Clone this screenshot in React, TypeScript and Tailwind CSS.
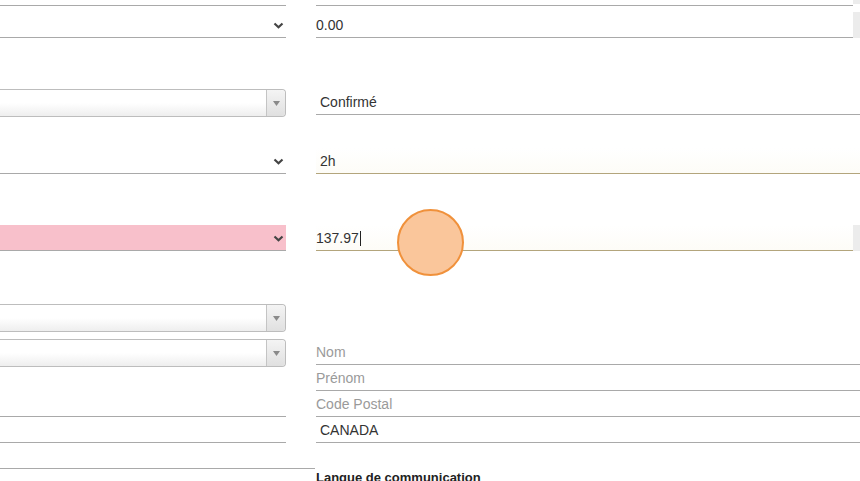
import React from "react";

const Chevron = () => (
  <svg width="11" height="7" viewBox="0 0 11 7" className="mr-[2px] mt-[1px]">
    <polyline
      points="1.5,1.5 5.5,5.2 9.5,1.5"
      fill="none"
      stroke="#444"
      strokeWidth="2.2"
    />
  </svg>
);

const NativeSelect = ({ pink = false }: { pink?: boolean }) => (
  <div
    className={`flex h-[26px] items-center justify-end border-b border-[#a9a9a9] ${
      pink ? "bg-[#f8c0cb]" : ""
    }`}
  >
    <Chevron />
  </div>
);

const ComboBox = ({ className = "" }: { className?: string }) => (
  <div
    className={`flex h-[28px] rounded-r-[4px] border border-l-0 border-[#bdbdbd] bg-gradient-to-b from-white from-50% to-[#eeeeee] ${className}`}
  >
    <div className="flex-1" />
    <div className="flex w-[19px] items-center justify-center rounded-r-[4px] border-l border-[#c4c4c4] bg-gradient-to-b from-[#f4f4f4] to-[#e0e0e0]">
      <svg width="7" height="5" viewBox="0 0 7 5">
        <polygon points="0,0 7,0 3.5,5" fill="#8a8a8a" />
      </svg>
    </div>
  </div>
);

interface FieldProps {
  value?: string;
  placeholder?: string;
  indent?: boolean;
  gold?: boolean;
  caret?: boolean;
  className?: string;
}

const Field = ({
  value,
  placeholder,
  indent = false,
  gold = false,
  caret = false,
  className = "",
}: FieldProps) => (
  <div
    className={`flex h-[26px] items-center border-b pt-[2px] text-[14px] ${
      gold
        ? "border-[#b3a57c] bg-gradient-to-b from-white to-[#fdfcf7]"
        : "border-[#a9a9a9]"
    } ${indent ? "pl-[4px]" : ""} ${className}`}
  >
    {value ? (
      <span className="text-[#333]">{value}</span>
    ) : (
      <span className="text-[#9a9a9a]">{placeholder}</span>
    )}
    {caret && <span className="ml-px h-[15px] w-px bg-[#222]" />}
  </div>
);

const SideTab = ({ className = "" }: { className?: string }) => (
  <div className={`w-[7px] bg-[#ececec] ${className}`} />
);

export default function App() {
  return (
    <div className="relative h-[481px] w-[860px] overflow-hidden bg-white font-['Liberation_Sans',Arial,sans-serif]">
      <div className="flex gap-[30px]">
        {/* left column */}
        <div className="flex w-[286px] flex-col">
          <div className="h-[6px] border-b border-[#a9a9a9]" />
          <div className="mt-[6px]">
            <NativeSelect />
          </div>
          <ComboBox className="mt-[51px]" />
          <div className="mt-[31px]">
            <NativeSelect />
          </div>
          <div className="mt-[51px]">
            <NativeSelect pink />
          </div>
          <ComboBox className="mt-[53px]" />
          <ComboBox className="mt-[7px]" />
          <div className="mt-[24px] h-[26px] border-b border-[#a9a9a9]" />
          <div className="h-[26px] border-b border-[#a9a9a9]" />
        </div>

        {/* right column */}
        <div className="flex flex-1 flex-col">
          <div className="flex items-start">
            <div className="h-[6px] flex-1 border-b border-[#a9a9a9]" />
            <SideTab className="h-[4px]" />
          </div>
          <div className="mt-[6px] flex">
            <Field value="0.00" className="flex-1" />
            <SideTab className="h-[26px]" />
          </div>
          <Field value="Confirmé" indent className="mt-[51px]" />
          <Field value="2h" indent gold className="mt-[33px]" />
          <div className="mt-[51px] flex">
            <Field value="137.97" gold caret className="flex-1" />
            <SideTab className="h-[26px]" />
          </div>
          <Field placeholder="Nom" className="mt-[88px]" />
          <Field placeholder="Prénom" />
          <Field placeholder="Code Postal" />
          <Field value="CANADA" indent />
        </div>
      </div>

      {/* bottom row */}
      <div className="mt-[25px] flex items-start">
        <div className="w-[315px] border-t border-[#a9a9a9]" />
        <div className="ml-px text-[13px] font-bold text-[#222]">
          Langue de communication
        </div>
      </div>

      {/* touch indicator */}
      <div className="absolute left-[397px] top-[209px] h-[67px] w-[67px] rounded-full border-2 border-[#f0913b] bg-[#fac69b]" />
    </div>
  );
}
